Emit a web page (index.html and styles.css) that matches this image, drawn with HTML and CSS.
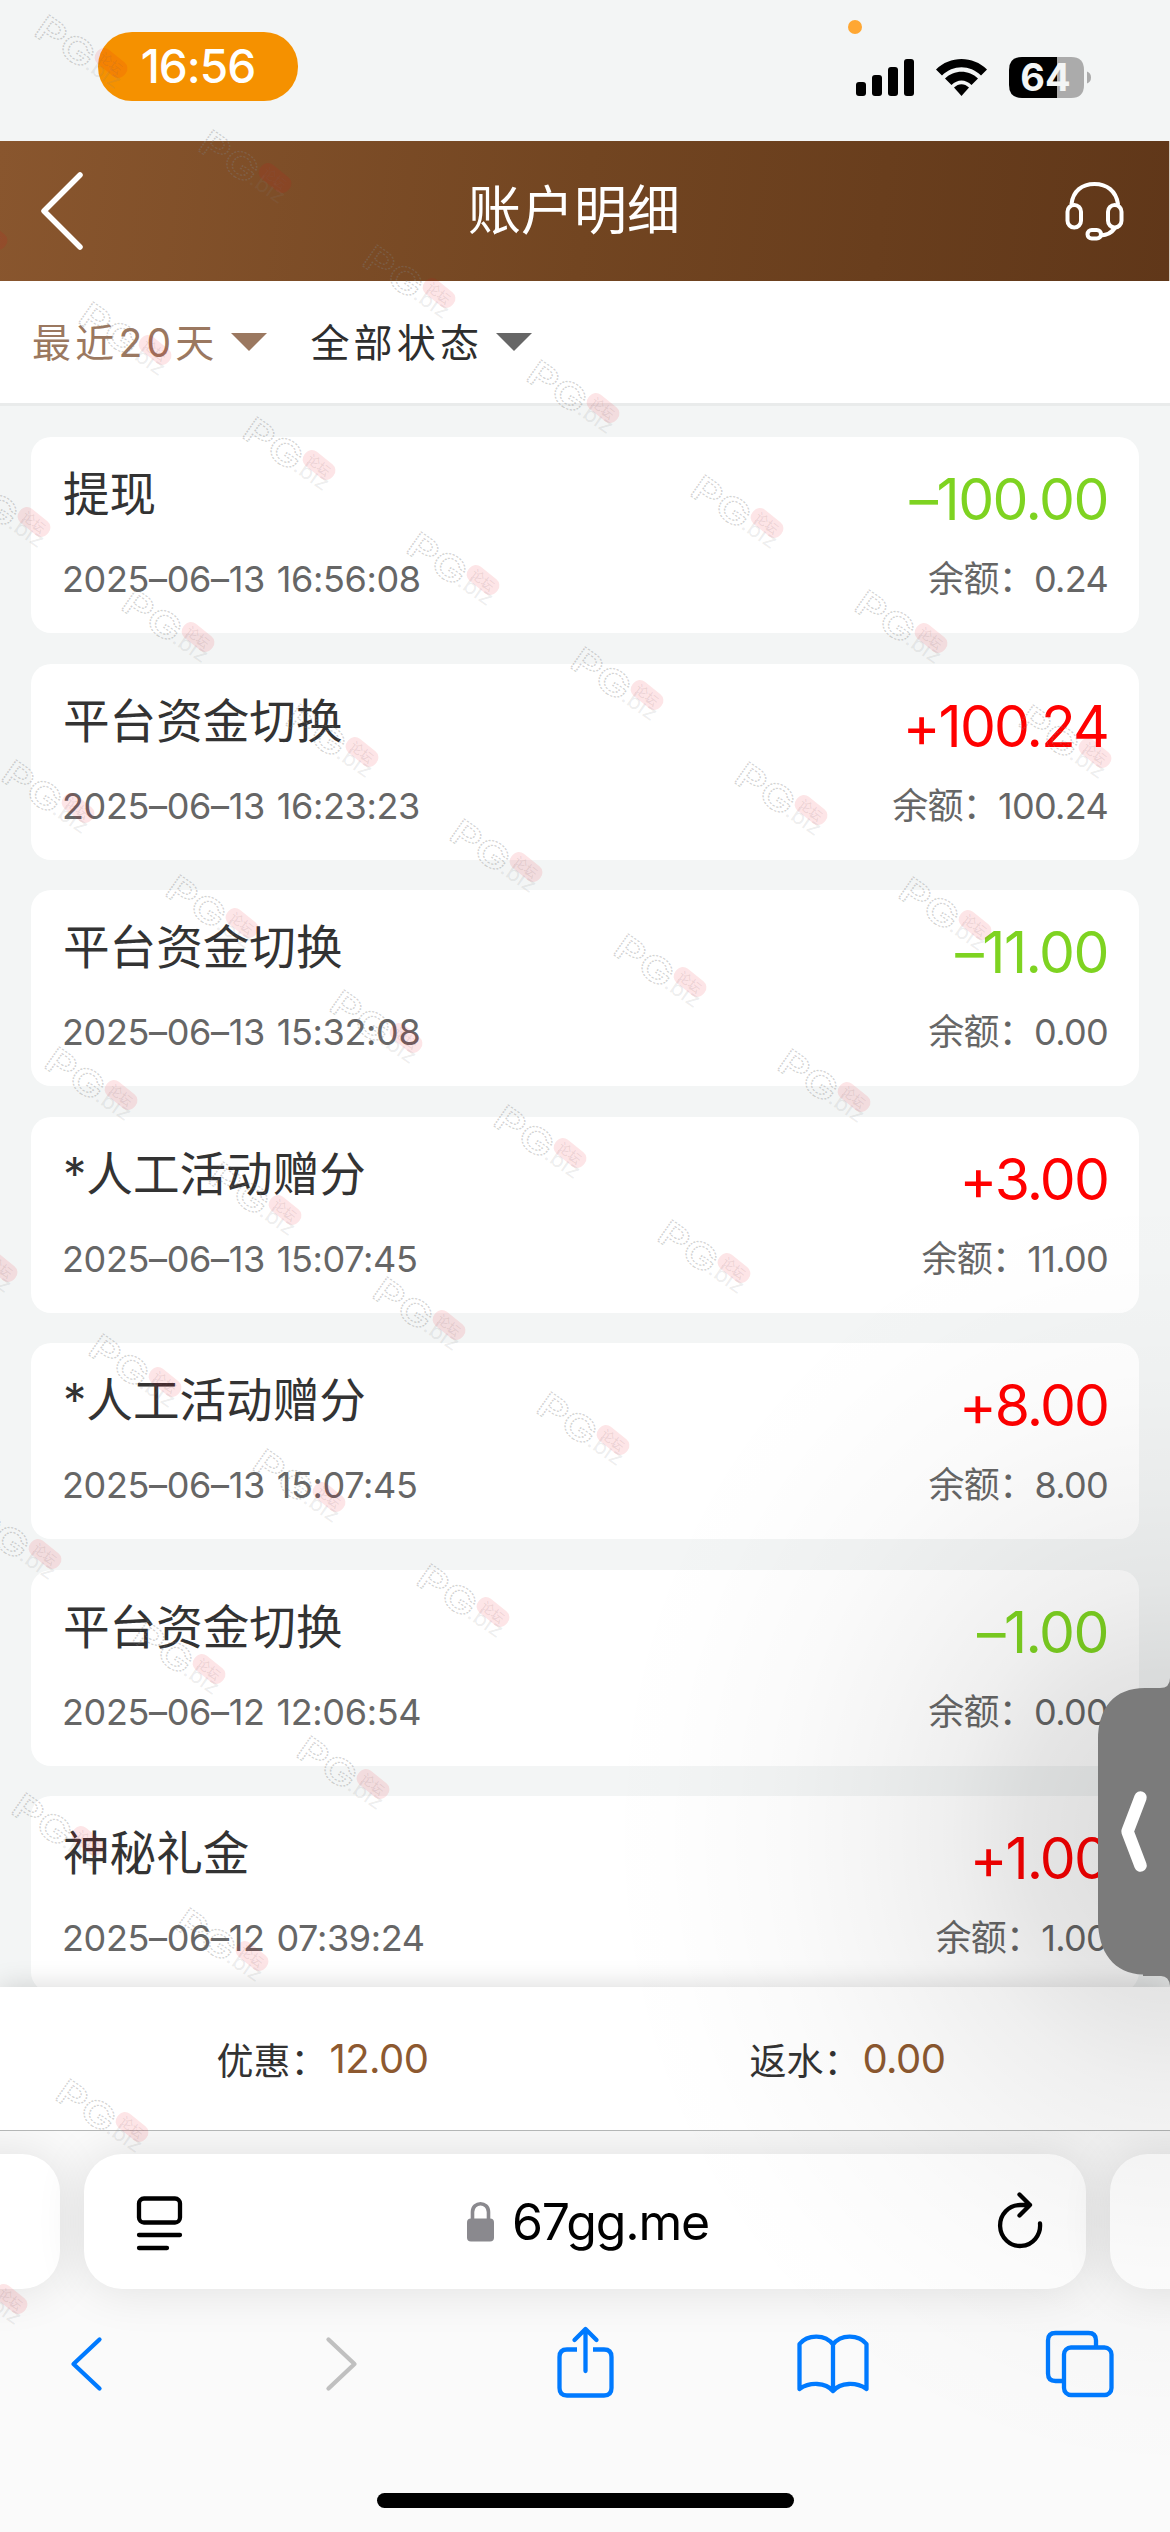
FILE: index.html
```html
<!DOCTYPE html>
<html lang="zh-CN">
<head>
<meta charset="utf-8">
<title>账户明细</title>
<link rel="stylesheet" href="styles.css">
</head>
<body>
<div class="screen">
  <header class="status">
    <div class="clock">16:56</div>
    <svg class="status-icons" width="250" height="90" viewBox="846 15 250 90">
      <circle cx="855" cy="27" r="7" fill="#ffa733"/>
      <rect x="856" y="82" width="10" height="14" rx="3"/>
      <rect x="872" y="75" width="10" height="21" rx="3"/>
      <rect x="888" y="67" width="10" height="29" rx="3"/>
      <rect x="904" y="59" width="10" height="37" rx="3"/>
      <path d="M936 69.500C950 55.500 973 55.500 987 69.500L981 75.500C970 64.500 953 64.500 942 75.500Z"/>
      <path d="M945 78.500C954 69.500 969 69.500 978 78.500L971.500 85C965.500 79 957.500 79 951.500 85Z"/>
      <path d="M954 87.500C958.500 83 964.500 83 969 87.500L961.500 96Z"/>
      <path d="M1057 57H1022Q1009 57 1009 70V85Q1009 98 1022 98H1057Z"/>
      <path d="M1057 57H1071Q1084 57 1084 70V85Q1084 98 1071 98H1057Z" fill="#ababab"/>
      <path d="M1087 71.500Q1091 73 1091 77.500T1087 83.500Z" fill="#ababab"/>
      <text class="battery" x="1045.500" y="91" text-anchor="middle">64</text>
    </svg>
  </header>

  <nav class="titlebar">
    <svg width="50" height="90" viewBox="36 166 50 90"><path d="M80 175L44 211L80 247" class="line white"/></svg>
    <h1>账户明细</h1>
    <svg width="64" height="64" viewBox="1062 179 64 64" class="line white thin">
      <path d="M1071.500 204C1073 191 1082 184 1094.500 184S1116 191 1118 204"/>
      <rect x="1067.500" y="205" width="13.500" height="22.500" rx="6.700"/>
      <rect x="1108" y="205" width="13.500" height="22.500" rx="6.700"/>
      <rect x="1087.500" y="230" width="13.500" height="8.500" rx="4.250"/>
      <path d="M1115 228Q1110 235 1101 235.500"/>
    </svg>
  </nav>

  <div class="filters">
    <span class="filter active"><span>最近20天</span><i class="caret"></i></span>
    <span class="filter"><span>全部状态</span><i class="caret"></i></span>
  </div>

  <main class="list">
    <article class="card">
      <div><h2>提现</h2><p>2025–06–13 16:56:08</p></div>
      <div class="right"><b class="out">–100.00</b><p>余额：0.24</p></div>
    </article>
    <article class="card">
      <div><h2>平台资金切换</h2><p>2025–06–13 16:23:23</p></div>
      <div class="right"><b>+100.24</b><p>余额：100.24</p></div>
    </article>
    <article class="card">
      <div><h2>平台资金切换</h2><p>2025–06–13 15:32:08</p></div>
      <div class="right"><b class="out">–11.00</b><p>余额：0.00</p></div>
    </article>
    <article class="card">
      <div><h2>*人工活动赠分</h2><p>2025–06–13 15:07:45</p></div>
      <div class="right"><b>+3.00</b><p>余额：11.00</p></div>
    </article>
    <article class="card">
      <div><h2>*人工活动赠分</h2><p>2025–06–13 15:07:45</p></div>
      <div class="right"><b>+8.00</b><p>余额：8.00</p></div>
    </article>
    <article class="card">
      <div><h2>平台资金切换</h2><p>2025–06–12 12:06:54</p></div>
      <div class="right"><b class="out">–1.00</b><p>余额：0.00</p></div>
    </article>
    <article class="card">
      <div><h2>神秘礼金</h2><p>2025–06–12 07:39:24</p></div>
      <div class="right"><b>+1.00</b><p>余额：1.00</p></div>
    </article>
  </main>

  <section class="totals">
    <div class="total"><span>优惠：</span><b>12.00</b></div>
    <div class="total"><span>返水：</span><b>0.00</b></div>
  </section>

  <footer class="browser">
    <div class="tabs">
      <div class="tab"></div>
      <div class="tab address">
        <svg width="50" height="60" viewBox="134 2191 50 60" class="line black">
          <rect x="139" y="2197.500" width="41" height="24" rx="5"/>
          <path d="M139 2234H180M139 2247H167"/>
        </svg>
        <div class="url">
          <svg width="28" height="42" viewBox="465 2200 28 42"><path d="M470.500 2218V2211C470.500 2200 486.500 2200 486.500 2211V2218" fill="none" stroke="#8a898e" stroke-width="3.600"/><rect x="465" y="2217.500" width="27" height="23" rx="4" fill="#8a898e"/></svg>
          <span>67gg.me</span>
        </div>
        <svg width="50" height="60" viewBox="995 2192 50 60" class="line black">
          <path d="M1040 2223.500A20 20.500 0 1 1 1020 2205H1030M1019.500 2194.500L1030 2205L1019.500 2215.500"/>
        </svg>
      </div>
      <div class="tab"></div>
    </div>
    <div class="tools">
      <svg width="80" height="80" viewBox="46 2324 80 80" class="line blue"><path d="M99.500 2339.500L73.500 2364L99.500 2388.500"/></svg>
      <svg width="80" height="80" viewBox="294.500 2324 80 80" class="line gray"><path d="M328 2339.500L354 2364L328 2388.500"/></svg>
      <svg width="80" height="80" viewBox="543 2324 80 80" class="line blue">
        <path d="M577 2349.500H567Q559.500 2349.500 559.500 2357V2388Q559.500 2395.500 567 2395.500H604Q611.500 2395.500 611.500 2388V2357Q611.500 2349.500 604 2349.500H593" stroke-linecap="butt"/>
        <path d="M585.500 2371V2330M574.500 2340L585.500 2329L596.500 2340"/>
      </svg>
      <svg width="80" height="80" viewBox="791.500 2324 80 80" class="line blue">
        <path d="M832.500 2391C825 2382 809 2382 799 2389V2344C807 2334 825 2334 832.500 2344.500V2391C840 2382 856 2382 866 2389V2344C858 2334 840 2334 832.500 2344.500"/>
      </svg>
      <svg width="80" height="80" viewBox="1040 2324 80 80" class="line blue">
        <path d="M1062 2381H1055.500Q1048 2381 1048 2373.500V2340.500Q1048 2333 1055.500 2333H1088.500Q1096 2333 1096 2340.500V2346" stroke-linecap="butt"/>
        <rect x="1064" y="2347.500" width="47.500" height="47.500" rx="7"/>
      </svg>
    </div>
    <div class="home"></div>
  </footer>

  <div class="shade"></div>

  <svg class="drawer" width="72" height="310" viewBox="1098 1676 72 310">
    <path d="M1170 1678Q1170 1688 1160 1688H1145C1114 1688 1098 1708 1098 1740V1920C1098 1952 1114 1974 1143 1974.500V1976H1161Q1169 1976 1170 1986Z" fill="#7b7b7b"/>
    <path d="M1140.500 1797.500L1127.500 1831.500L1140.500 1865.500" fill="none" stroke="#fff" stroke-width="12.500" stroke-linecap="round" stroke-linejoin="round"/>
  </svg>

  <svg class="watermark" width="1170" height="2532" viewBox="0 0 1170 2532">
    <defs>
      <g id="mark">
        <g transform="rotate(35)">
          <text class="wm-big" x="0" y="0" textLength="64" lengthAdjust="spacingAndGlyphs">PG</text>
          <text class="wm-small" x="62" y="-2" textLength="38" lengthAdjust="spacingAndGlyphs">.biz</text>
        </g>
        <g transform="translate(79 29) rotate(39)">
          <rect class="wm-pill" x="-18" y="-9" width="36" height="18" rx="8"/>
          <text class="wm-cjk" x="0" y="5" text-anchor="middle">论坛</text>
        </g>
      </g>
    </defs>
    <use href="#mark" x="32" y="34"/><use href="#mark" x="196" y="149"/><use href="#mark" x="360" y="264"/><use href="#mark" x="524" y="379"/><use href="#mark" x="688" y="494"/><use href="#mark" x="852" y="609"/><use href="#mark" x="1016" y="724"/>
    <use href="#mark" x="-88" y="206"/><use href="#mark" x="76" y="321"/><use href="#mark" x="240" y="436"/><use href="#mark" x="404" y="551"/><use href="#mark" x="568" y="666"/><use href="#mark" x="732" y="781"/><use href="#mark" x="896" y="896"/>
    <use href="#mark" x="-45" y="493"/><use href="#mark" x="119" y="608"/><use href="#mark" x="283" y="723"/><use href="#mark" x="447" y="838"/><use href="#mark" x="611" y="953"/><use href="#mark" x="775" y="1068"/>
    <use href="#mark" x="-1" y="779"/><use href="#mark" x="163" y="894"/><use href="#mark" x="327" y="1009"/><use href="#mark" x="491" y="1124"/><use href="#mark" x="655" y="1239"/>
    <use href="#mark" x="42" y="1066"/><use href="#mark" x="206" y="1181"/><use href="#mark" x="370" y="1296"/><use href="#mark" x="534" y="1411"/>
    <use href="#mark" x="-78" y="1238"/><use href="#mark" x="86" y="1353"/><use href="#mark" x="250" y="1468"/><use href="#mark" x="414" y="1583"/>
    <use href="#mark" x="-34" y="1525"/><use href="#mark" x="130" y="1640"/><use href="#mark" x="294" y="1755"/>
    <use href="#mark" x="9" y="1812"/><use href="#mark" x="173" y="1927"/>
    <use href="#mark" x="53" y="2098"/><use href="#mark" x="-68" y="2270"/>
  </svg>
</div>
</body>
</html>
```

FILE: styles.css
```css
* { box-sizing: border-box; }
body {
  margin: 0;
  font-family: Inter, "Noto Sans CJK SC", sans-serif;
  color: #333;
}
h1, h2, p { margin: 0; font-weight: 400; }
b { font-weight: 400; }
svg { display: block; flex: none; }

.screen {
  position: relative;
  display: flex;
  flex-direction: column;
  width: 1170px;
  height: 2532px;
  overflow: hidden;
  background: #f3f5f5;
}

.line { fill: none; stroke-width: 4.300; stroke-linecap: round; stroke-linejoin: round; }
.white { stroke: #fff; stroke-width: 5.500; }
.thin { stroke-width: 4; }
.black { stroke: #000; }
.blue { stroke: #007aff; }
.gray { stroke: #c0c0c0; }

/* Status bar */
.status {
  display: flex;
  justify-content: space-between;
  align-items: flex-start;
  height: 141px;
  padding: 15px 74px 0 98px;
}
.clock {
  width: 200px;
  height: 69px;
  margin-top: 17px;
  border-radius: 34px;
  background: #f59100;
  color: #fff;
  font-size: 46px;
  font-weight: 500;
  line-height: 69px;
  text-align: center;
  letter-spacing: -1px;
}
.battery { font-size: 38px; font-weight: 700; fill: #f3f5f5; }

/* Title bar */
.titlebar {
  display: flex;
  justify-content: space-between;
  align-items: center;
  height: 140px;
  padding: 0 43px 0 36px;
  border-right: 1px solid #d9cdc4;
  background: linear-gradient(97deg, #89562e, #724521 50%, #603719);
}
.titlebar h1 {
  color: #fff;
  font-size: 53px;
  line-height: 80px;
}

/* Filters */
.filters {
  display: flex;
  align-items: center;
  gap: 43px;
  height: 125px;
  padding-left: 32px;
  border-bottom: 3px solid #e9ebeb;
  background: #fff;
}
.filter {
  display: flex;
  align-items: center;
  gap: 13px;
  font-size: 39px;
  letter-spacing: 4.200px;
  color: #2e2e2e;
}
.filter span { padding-bottom: 5px; }
.caret {
  border: 18px solid transparent;
  border-top-color: #666;
  border-bottom: 0;
}
.active { color: #9b7860; }
.active .caret { border-top-color: #9b7860; }

/* Records */
.list {
  display: flex;
  flex-direction: column;
  gap: 30.500px;
  height: 1581px;
  padding: 31px 31px 0;
  overflow: hidden;
}
.card {
  display: flex;
  flex: none;
  justify-content: space-between;
  height: 196px;
  padding: 27px 31px 0 32px;
  border-radius: 20px;
  background: #fff;
}
.card h2 { font-size: 46.600px; line-height: 60px; }
.card p {
  margin: 33px 0 0 -1px;
  font-size: 36px;
  line-height: 44px;
  color: #666;
  letter-spacing: -0.350px;
  word-spacing: 2px;
}
.right { text-align: right; }
.card .right b {
  display: block;
  margin-top: 1px;
  font-size: 57px;
  line-height: 70px;
  color: #f00;
  letter-spacing: -1.900px;
}
.card .right .out { color: #7ed321; letter-spacing: -1.500px; }
.card .right p { margin-top: 22px; letter-spacing: -0.700px; }

/* Totals */
.totals {
  position: relative;
  display: flex;
  height: 144px;
  padding: 0 60px;
  border-bottom: 1px solid #b4b6b6;
  background: #fff;
  box-shadow: 0 0 26px rgba(0, 0, 0, .16);
}
.total {
  display: flex;
  flex: 1;
  justify-content: center;
  align-items: center;
  font-size: 37px;
}
.total b { margin-left: 2px; font-size: 40px; color: #8d5930; letter-spacing: -0.500px; }

/* Browser chrome */
.browser {
  position: relative;
  flex: 1;
  overflow: hidden;
  background: #fafafa;
}
.tabs {
  display: flex;
  gap: 24px;
  height: 158px;
  margin: 0 -60px;
  padding-top: 23px;
}
.tab {
  flex: none;
  width: 120px;
  height: 135px;
  border-radius: 38px;
  background: #fff;
  box-shadow: 0 0 50px rgba(0, 0, 0, .11);
}
.address {
  display: flex;
  justify-content: space-between;
  align-items: center;
  width: 1002px;
  padding: 0 41px 0 50px;
}
.url {
  display: flex;
  align-items: center;
  gap: 17px;
  margin-right: 3px;
  color: #000;
  font-size: 50px;
  letter-spacing: -1.200px;
}
.tools {
  display: flex;
  justify-content: space-between;
  margin-top: 35px;
  padding: 0 50px 0 46px;
}
.home {
  width: 417px;
  height: 15px;
  margin: 89px auto 0;
  border-radius: 8px;
  background: #000;
}

/* Layers over the page */
.shade, .drawer, .watermark { position: absolute; pointer-events: none; }
.shade {
  inset: 0;
  background: radial-gradient(ellipse 580px 660px at 1170px 1835px,
    rgba(0, 0, 0, .135) 0, rgba(0, 0, 0, .120) 13%, rgba(0, 0, 0, .100) 25%,
    rgba(0, 0, 0, .062) 38%, rgba(0, 0, 0, .038) 52%, rgba(0, 0, 0, .020) 67%,
    rgba(0, 0, 0, .005) 88%, transparent 100%);
}
.drawer { right: 0; top: 1676px; }
.watermark { inset: 0; }
.wm-big {
  font-size: 35px;
  font-weight: 600;
  fill: none;
  stroke: #808080;
  stroke-opacity: .360;
  stroke-width: 1.200;
  stroke-dasharray: 1.800 1.200;
}
.wm-small { font-size: 21px; fill: #808080; fill-opacity: .150; }
.wm-pill { fill: #f00014; fill-opacity: .100; }
.wm-cjk { font-size: 13px; fill: #806060; fill-opacity: .150; }
```
